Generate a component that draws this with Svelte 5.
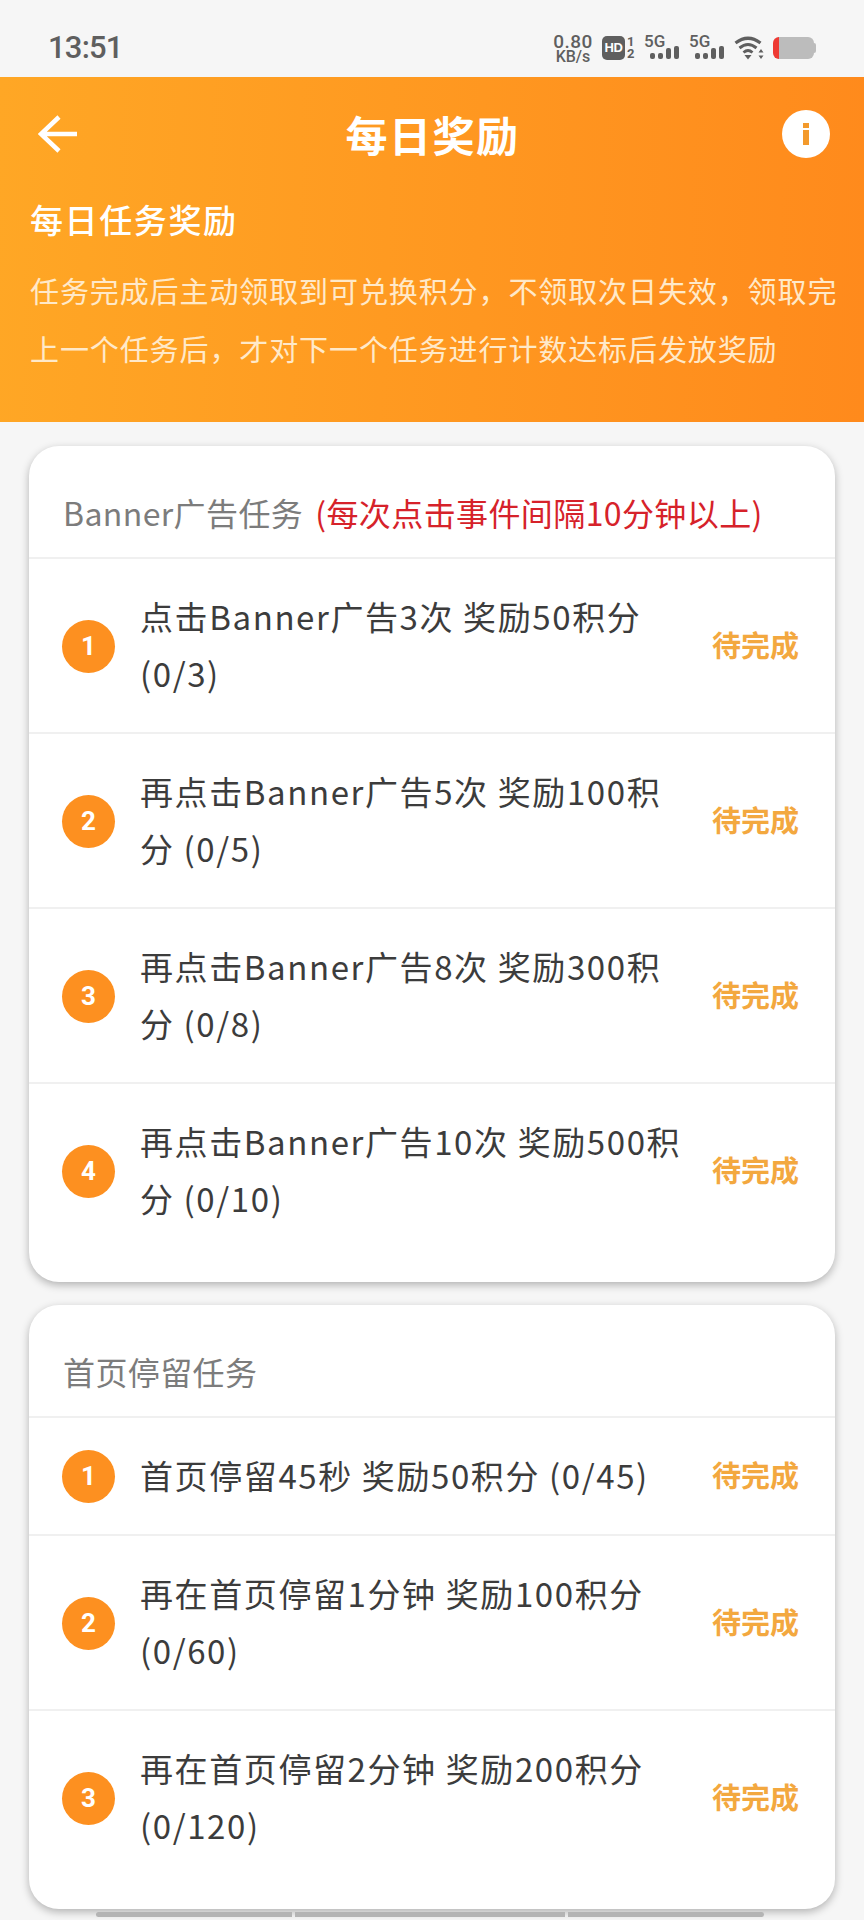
<script>
  const statusText = "待完成";
  const groups = [
    {
      title: "Banner广告任务",
      note: "(每次点击事件间隔10分钟以上)",
      tasks: [
        "点击Banner广告3次 奖励50积分 (0/3)",
        "再点击Banner广告5次 奖励100积分 (0/5)",
        "再点击Banner广告8次 奖励300积分 (0/8)",
        "再点击Banner广告10次 奖励500积分 (0/10)",
      ],
    },
    {
      title: "首页停留任务",
      note: "",
      tasks: [
        "首页停留45秒 奖励50积分 (0/45)",
        "再在首页停留1分钟 奖励100积分 (0/60)",
        "再在首页停留2分钟 奖励200积分 (0/120)",
      ],
    },
  ];
</script>

<div class="page">
  <div class="statusbar">
    <span class="time">13:51</span>
    <div class="status-icons">
      <div class="speed"><span>0.80</span><span>KB/s</span></div>
      <div class="hd"><span class="hd-box">HD</span><div class="hd-nums"><span>1</span><span>2</span></div></div>
      {#each [0, 1] as sim}
        <div class="signal">
          <span class="five-g">5G</span>
          <div class="bars">
            <i style="height: 6px"></i>
            <i style="height: 6px"></i>
            <i style="height: 11px"></i>
            <i style="height: 13px"></i>
          </div>
        </div>
      {/each}
      <svg class="wifi" width="30" height="24" viewBox="0 0 30 24">
        <path d="M1.500 7Q14 -2.500 26.500 7" fill="none" stroke="#5f5f5f" stroke-width="3.200"/>
        <path d="M5.500 12Q14 5 22.500 12" fill="none" stroke="#5f5f5f" stroke-width="3"/>
        <path d="M9.500 16.500Q14 12.500 18.500 16.500" fill="none" stroke="#5f5f5f" stroke-width="2.800"/>
        <path d="M10.500 19H17.500L14 23.500Z" fill="#5f5f5f"/>
        <path d="M27 13L29.500 16.500H24.500ZM27 23L24.500 19.500H29.500Z" fill="#5f5f5f"/>
      </svg>
      <div class="battery"><span class="level"></span><span class="tip"></span></div>
    </div>
  </div>

  <header class="hero">
    <div class="topbar">
      <svg width="40" height="38" viewBox="0 0 40 38">
        <path d="M21 2L3 19L21 36M3 19H39" fill="none" stroke="#fff" stroke-width="4.500"/>
      </svg>
      <h1>每日奖励</h1>
      <svg width="48" height="48" viewBox="0 0 48 48">
        <circle cx="24" cy="24" r="24" fill="#fff"/>
        <rect x="21" y="13" width="6" height="5" fill="#f39a2c"/>
        <rect x="21" y="20" width="6" height="15" fill="#f39a2c"/>
      </svg>
    </div>
    <h2>每日任务奖励</h2>
    <p>任务完成后主动领取到可兑换积分，不领取次日失效，领取完上一个任务后，才对下一个任务进行计数达标后发放奖励</p>
  </header>

  <main class="content">
    {#each groups as group}
      <section class="card">
        <div class="card-title">{group.title}{#if group.note}<span class="note">{group.note}</span>{/if}</div>
        {#each group.tasks as task, i}
          <div class="task">
            <span class="num">{i + 1}</span>
            <span class="label">{task}</span>
            <span class="state">{statusText}</span>
          </div>
        {/each}
      </section>
    {/each}
    <div class="peek"><i class="one"></i><i class="two"></i><i class="three"></i></div>
  </main>
</div>

<style>
  :global(body) {
    background: #f6f6f6;
  }

  .page {
    width: 864px;
    height: 1920px;
    overflow: hidden;
    background: #f6f6f6;
    font-family: "Noto Sans CJK SC", "Noto Sans", sans-serif;
    color: #333;
  }

  .statusbar {
    height: 77px;
    box-sizing: border-box;
    padding: 31px 48px 0 48px;
    display: flex;
    justify-content: space-between;
    align-items: flex-start;
    color: #5f5f5f;
  }

  .time {
    font-family: Roboto, sans-serif;
    font-weight: 500;
    font-size: 31px;
    line-height: 34px;
    letter-spacing: -0.800px;
  }

  .status-icons {
    display: flex;
    align-items: center;
    height: 32px;
    margin-top: 1px;
  }

  .speed {
    width: 38px;
    display: flex;
    flex-direction: column;
    align-items: center;
    font-family: Roboto, sans-serif;
    font-size: 16px;
    font-weight: 500;
    margin-right: 10px;
  }

  .speed span {
    display: block;
    height: 14px;
    line-height: 14px;
  }

  .speed span:first-child {
    font-size: 19px;
    height: 17px;
    line-height: 17px;
    letter-spacing: 0.500px;
  }

  .hd {
    display: flex;
    align-items: center;
    margin-right: 9px;
  }

  .hd-box {
    width: 23px;
    height: 24px;
    border-radius: 5px;
    background: #5f5f5f;
    color: #fff;
    font-family: "Liberation Sans", sans-serif;
    font-weight: 700;
    font-size: 13px;
    line-height: 24px;
    text-align: center;
    letter-spacing: -0.500px;
  }

  .hd-nums {
    display: flex;
    flex-direction: column;
    font-family: Roboto, sans-serif;
    font-weight: 700;
    font-size: 13px;
    margin-left: 2px;
    width: 8px;
  }

  .hd-nums span {
    display: block;
    height: 12px;
    line-height: 12px;
  }

  .signal {
    width: 35px;
    height: 30px;
    margin-right: 10px;
    position: relative;
  }

  .five-g {
    font-family: Roboto, sans-serif;
    font-weight: 500;
    font-size: 17px;
    line-height: 16px;
    position: absolute;
    left: 0;
    top: 0;
  }

  .bars {
    position: absolute;
    right: 0;
    bottom: 4px;
    display: flex;
    align-items: flex-end;
    gap: 3px;
  }

  .bars i {
    display: block;
    width: 5px;
    border-radius: 2px;
    background: #5f5f5f;
  }

  .wifi {
    margin-right: 9px;
  }

  .battery {
    display: flex;
    align-items: center;
  }

  .level {
    display: block;
    width: 41px;
    height: 22px;
    box-sizing: border-box;
    border-radius: 6px;
    background: #bcbcbc;
    border-left: 6px solid #ee3a33;
  }

  .tip {
    display: block;
    width: 2px;
    height: 10px;
    background: #bcbcbc;
    border-radius: 0 2px 2px 0;
  }

  .hero {
    height: 345px;
    box-sizing: border-box;
    padding: 33px 20px 0 30px;
    background: linear-gradient(92deg, #ffa725, #ff8a1c);
    color: #fff;
  }

  .topbar {
    display: flex;
    align-items: center;
    justify-content: space-between;
    padding: 0 14px 0 8px;
    height: 48px;
  }

  h1 {
    margin: 0 0 0 5px;
    font-size: 42px;
    line-height: 48px;
    font-weight: 700;
    letter-spacing: 1.500px;
  }

  h2 {
    margin: 39px 0 0;
    font-size: 33px;
    line-height: 44px;
    font-weight: 500;
    letter-spacing: 1.600px;
  }

  p {
    margin: 20px 0 0;
    font-size: 29px;
    line-height: 58px;
    letter-spacing: 0.900px;
    color: #ffe9c9;
  }

  .content {
    padding: 24px 29px 0;
    display: flex;
    flex-direction: column;
    gap: 23px;
  }

  .card {
    background: #fff;
    border-radius: 30px;
    box-shadow: 0 3px 8px rgba(0, 0, 0, 0.28);
    padding-bottom: 25px;
  }

  .card-title {
    height: 113px;
    box-sizing: border-box;
    padding: 42px 34px 0;
    font-size: 32px;
    line-height: 48px;
    letter-spacing: 0.400px;
    color: #7c7c7c;
    border-bottom: 2px solid #f0f0f0;
    white-space: nowrap;
  }

  .note {
    margin-left: 12px;
    color: #d6222a;
  }

  .task {
    display: flex;
    align-items: center;
    padding: 30px 36px 29px 33px;
    border-bottom: 2px solid #f0f0f0;
  }

  .task:last-child {
    border-bottom: none;
  }

  .num {
    flex: none;
    width: 53px;
    height: 53px;
    border-radius: 50%;
    background: #fd9020;
    color: #fff;
    font-family: Roboto, sans-serif;
    font-weight: 700;
    font-size: 26px;
    line-height: 53px;
    text-align: center;
  }

  .label {
    flex: 1;
    margin: -1px 24px 0 25px;
    padding-bottom: 1px;
    font-size: 33px;
    line-height: 57px;
    color: #3c3c3c;
    letter-spacing: 1.600px;
  }

  .state {
    flex: none;
    width: 87px;
    font-size: 29px;
    font-weight: 700;
    line-height: 36px;
    margin-top: -5px;
    color: #f3a83f;
    white-space: nowrap;
  }

  .peek {
    display: flex;
    gap: 3px;
    margin: -20px 0 0 67px;
  }

  .peek i {
    display: block;
    height: 5px;
    background: #b4b4b4;
  }

  .one {
    width: 196px;
    border-radius: 3px 0 0 3px;
  }

  .two {
    width: 270px;
  }

  .three {
    width: 196px;
    border-radius: 0 3px 3px 0;
  }
</style>
